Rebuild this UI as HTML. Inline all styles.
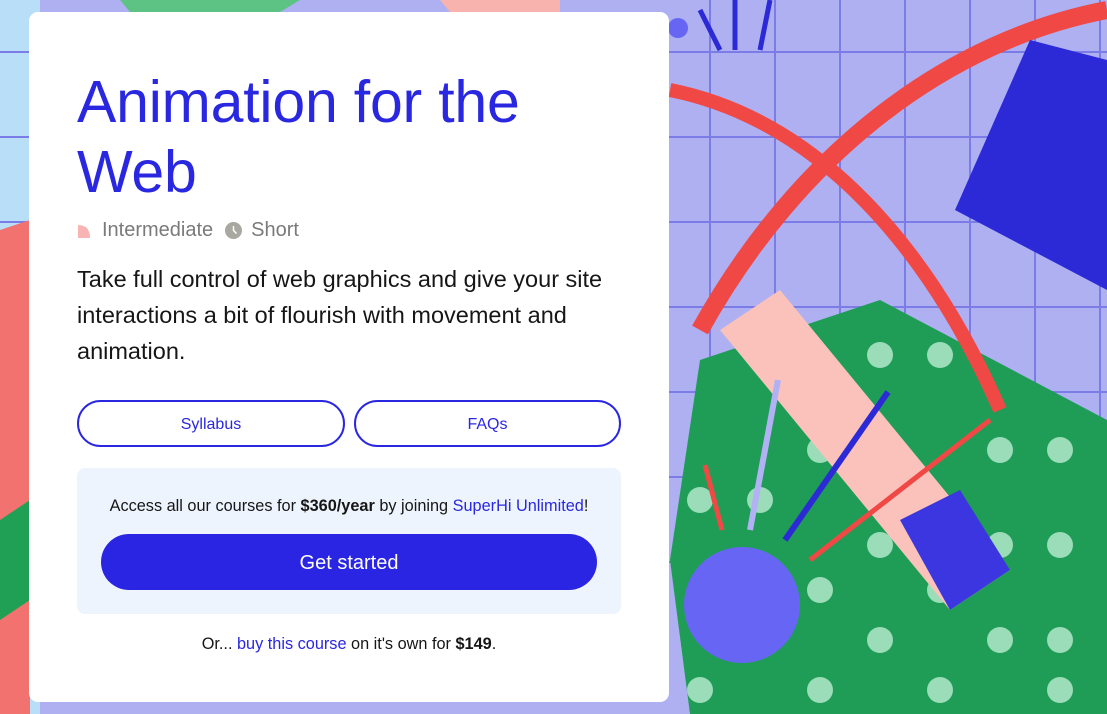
<!DOCTYPE html>
<html><head><meta charset="utf-8"><style>
*{margin:0;padding:0;box-sizing:border-box}
body{width:1107px;height:714px;overflow:hidden;position:relative;font-family:"Liberation Sans",sans-serif;background:#aeb0f2}
svg.bg{position:absolute;left:0;top:0}
.card{position:absolute;left:29px;top:12px;width:640px;height:690px;background:#fff;border-radius:9px}
h1{position:absolute;left:48px;top:55px;font-weight:400;font-size:59px;line-height:70px;color:#2a27e0;letter-spacing:-0.2px}
.meta{position:absolute;left:48px;top:207px;font-size:20px;color:#7a7a7a;display:flex;align-items:center}
.desc{position:absolute;left:48px;top:249px;width:580px;font-size:23.5px;line-height:36px;color:#161616}
.btn{position:absolute;top:388px;height:47px;border:2px solid #2a27e0;border-radius:24px;color:#2a27e0;font-size:16px;display:flex;align-items:center;justify-content:center;padding-top:3px}
.box{position:absolute;left:48px;top:456px;width:544px;height:146px;background:#eef4fd;border-radius:8px}
.box p{position:absolute;top:29px;width:100%;text-align:center;font-size:16.3px;color:#161616}
.go{position:absolute;left:24px;top:66px;width:496px;height:56px;background:#2a25e3;border-radius:28px;color:#fff;font-size:20px;display:flex;align-items:center;justify-content:center;padding-top:3px}
.or{position:absolute;top:623px;width:100%;text-align:center;font-size:16.3px;color:#161616}
a{color:#2a27e0;text-decoration:none}
</style></head><body>
<svg class="bg" width="1107" height="714" viewBox="0 0 1107 714">
<rect width="1107" height="714" fill="#aeb0f2"/>
<rect x="0" y="0" width="40" height="714" fill="#b9def7"/>
<g stroke="#7b7ce6" stroke-width="2">
<line x1="0" y1="52" x2="1107" y2="52"/><line x1="0" y1="137" x2="1107" y2="137"/><line x1="0" y1="222" x2="1107" y2="222"/><line x1="0" y1="307" x2="1107" y2="307"/><line x1="0" y1="392" x2="1107" y2="392"/><line x1="0" y1="477" x2="1107" y2="477"/><line x1="0" y1="562" x2="1107" y2="562"/>
<line x1="710" y1="0" x2="710" y2="714"/><line x1="775" y1="0" x2="775" y2="714"/><line x1="840" y1="0" x2="840" y2="714"/><line x1="905" y1="0" x2="905" y2="714"/><line x1="970" y1="0" x2="970" y2="714"/><line x1="1035" y1="0" x2="1035" y2="714"/><line x1="1100" y1="0" x2="1100" y2="714"/>
</g>
<path d="M0 230 L30 220 L30 714 L0 714Z" fill="#f2726f"/>
<path d="M0 520 L30 500 L30 600 L0 620Z" fill="#1fa055"/>
<path d="M120 0 L300 0 L280 12 L130 12Z" fill="#5cc384"/>
<path d="M440 0 L560 0 L560 12 L450 12Z" fill="#f9b3ae"/>
<path d="M700 360 L880 300 L1107 420 L1107 714 L690 714 L670 560Z" fill="#1f9d57"/>
<g fill="#9bdcb9"><circle cx="880" cy="355" r="13"/><circle cx="940" cy="355" r="13"/><circle cx="1000" cy="450" r="13"/><circle cx="1060" cy="450" r="13"/><circle cx="820" cy="450" r="13"/><circle cx="700" cy="500" r="13"/><circle cx="760" cy="500" r="13"/><circle cx="880" cy="545" r="13"/><circle cx="1000" cy="545" r="13"/><circle cx="1060" cy="545" r="13"/><circle cx="820" cy="590" r="13"/><circle cx="940" cy="590" r="13"/><circle cx="1060" cy="640" r="13"/><circle cx="880" cy="640" r="13"/><circle cx="1000" cy="640" r="13"/><circle cx="700" cy="690" r="13"/><circle cx="820" cy="690" r="13"/><circle cx="940" cy="690" r="13"/><circle cx="1060" cy="690" r="13"/></g>
<path d="M720 330 L780 290 L1010 570 L950 610Z" fill="#fbc2bb"/>
<path d="M900 520 L960 490 L1010 570 L950 610Z" fill="#3b36e0"/>
<path d="M670 90 C820 120 930 250 1000 410" stroke="#f04845" stroke-width="14" fill="none"/>
<path d="M700 330 C800 150 950 40 1107 10" stroke="#f04845" stroke-width="18" fill="none"/>
<path d="M955 210 L1030 40 L1107 60 L1107 290Z" fill="#2b2ad6"/>
<circle cx="742" cy="605" r="58" fill="#6765f4"/>
<line x1="750" y1="530" x2="778" y2="380" stroke="#b2b1f5" stroke-width="6"/>
<line x1="785" y1="540" x2="888" y2="392" stroke="#2b2ad6" stroke-width="6"/>
<line x1="810" y1="560" x2="990" y2="420" stroke="#f04845" stroke-width="5"/>
<line x1="705" y1="465" x2="722" y2="530" stroke="#f04845" stroke-width="5"/>
<path d="M700 10 L720 50 M735 0 L735 50 M770 0 L760 50" stroke="#2b2ad6" stroke-width="5" fill="none"/>
<circle cx="678" cy="28" r="10" fill="#6765f4"/>
</svg>
<div class="card">
<h1>Animation for the<br>Web</h1>
<div class="meta"><svg width="14" height="14" style="margin-right:11px"><path d="M1 1 Q13 1 13 14 L1 14Z" fill="#f8b4b4"/></svg>Intermediate<svg width="17" height="17" style="margin:0 9px 0 12px"><circle cx="8.5" cy="8.5" r="8.5" fill="#a8a8a0"/><path d="M8.5 4 L8.5 8.5 L11.5 11.5" stroke="#fff" stroke-width="1.5" fill="none"/></svg>Short</div>
<div class="desc">Take full control of web graphics and give your site interactions a bit of flourish with movement and animation.</div>
<div class="btn" style="left:48px;width:268px">Syllabus</div>
<div class="btn" style="left:325px;width:267px">FAQs</div>
<div class="box"><p>Access all our courses for <b>$360/year</b> by joining <a>SuperHi Unlimited</a>!</p><div class="go">Get started</div></div>
<div class="or">Or... <a>buy this course</a> on it's own for <b>$149</b>.</div>
</div>
</body></html>
